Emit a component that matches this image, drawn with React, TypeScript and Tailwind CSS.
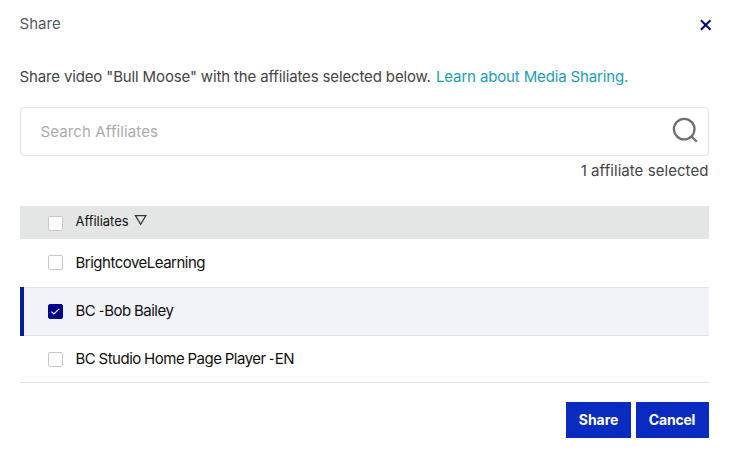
import { useState } from "react";

const rows = [
  { lead: "", name: "BrightcoveLearning", spacing: "tracking-[-0.5px]" },
  { lead: "BC", name: "Bob Bailey", spacing: "tracking-[-0.5px] [word-spacing:-0.5px]" },
  { lead: "BC Studio Home Page Player", name: "EN", spacing: "tracking-[-0.5px] [word-spacing:-0.4px]" },
];

function Checkbox({ checked, onClick, label }: { checked: boolean; onClick?: () => void; label: string }) {
  return (
    <button
      role="checkbox"
      aria-checked={checked}
      aria-label={label}
      onClick={onClick}
      className={`flex size-[15px] shrink-0 items-center justify-center rounded-[2px] border ${
        checked ? "border-[#03008b] bg-[#03008b]" : "border-[#c8c8c8] bg-white"
      }`}
    >
      {checked && (
        <svg width="11" height="9" viewBox="0 0 11 9" fill="none" stroke="white" strokeWidth="1.1" className="-ml-px shrink-0">
          <path d="M1.4 4.6 L3.9 7 L9.2 1.8" />
        </svg>
      )}
    </button>
  );
}

export default function App() {
  const [selected, setSelected] = useState([false, true, false]);
  const toggle = (i: number) => setSelected((s) => s.map((v, j) => (j === i ? !v : v)));
  const count = selected.filter(Boolean).length;

  return (
    <main className="flex h-[458px] w-[729px] flex-col bg-white pr-5 pl-5 font-['Inter',sans-serif] text-[15px] text-[#444444]">
      <header className="flex h-[48px] items-center justify-between">
        <h1 className="-ml-[0.5px] leading-[20px] tracking-[0.05px] text-[#555963]">Share</h1>
        <button aria-label="Close" className="mt-[2px] -mr-[3px]">
          <svg width="13" height="12" viewBox="0 0 13 12" fill="none" stroke="#03008b" strokeWidth="2">
            <path d="M1.9 1.2 L11.5 10.8 M11.5 1.2 L1.9 10.8" />
          </svg>
        </button>
      </header>

      <p className="mt-[18px] flex h-[22px] items-center whitespace-nowrap">
        <span className="-ml-[0.5px] w-[416.5px] tracking-[-0.14px]">
          Share video "Bull Moose" with the affiliates selected below.
        </span>
        <a href="#" className="tracking-[-0.14px] text-[#169fb5]">Learn about Media Sharing.</a>
      </p>

      <div className="mt-[19px] flex h-[49px] w-[689px] shrink-0 items-center rounded-[4px] border border-[#e3e3e3] pl-[19.5px] pr-[9px]">
        <input
          placeholder="Search Affiliates"
          className="mt-px min-w-0 flex-1 tracking-[0.12px] outline-none placeholder:text-[#ababab]"
        />
        <svg width="28" height="28" viewBox="0 0 28 28" fill="none" stroke="#6c6f76" strokeWidth="2.3" className="-mt-[3px]">
          <circle cx="13.2" cy="13.1" r="10.3" />
          <path d="M20.4 20.4 L25.8 25.7" />
        </svg>
      </div>

      <p className="mt-[5px] mr-[0.5px] h-[20px] text-right leading-[20px] tracking-[0.06px]">{count} affiliate selected</p>

      <section className="mt-[25px] w-[689px] text-[#101010]">
        <div className="flex h-[33px] items-center bg-[#e4e6e5] pl-7">
          <div className="mt-px mr-[12.5px]">
            <Checkbox label="Select all" checked={false} />
          </div>
          <span className="-mt-[2px] text-[13px] tracking-[-0.04px]">Affiliates</span>
          <svg width="14" height="12" viewBox="0 0 14 12" fill="none" stroke="#333" strokeWidth="1.2" className="-mt-[5px] ml-[5px]">
            <path d="M1.4 1.6 H11.9 L6.65 10.3 Z" />
          </svg>
        </div>
        {rows.map((row, i) => (
          <div
            key={row.name}
            className={`flex items-center gap-[12.5px] border-[#e2e3e5] ${
              selected[i]
                ? "ml-1 h-[49px] border-y bg-[#f2f3f9] pl-6 shadow-[-4px_0_#041e91]"
                : i === 0
                  ? "h-[48px] pl-7"
                  : "h-[47px] border-b pl-7"
            }`}
          >
            <div className={i === 0 ? "-mt-px" : ""}>
              <Checkbox label={row.name} checked={selected[i]} onClick={() => toggle(i)} />
            </div>
            <span className={row.spacing}>
              {row.lead && (
                <>
                  {row.lead}{" "}
                  <span className="inline-block w-[5px] origin-left scale-x-75">-</span>
                  <span className="[word-spacing:-3px]"> </span>
                </>
              )}
              {row.name}
            </span>
          </div>
        ))}
      </section>

      <footer className="mt-[19px] flex w-[689px] justify-end gap-[5px] text-[14px] font-bold text-white">
        <button className="h-[36px] w-[65px] bg-[#092bbf] pb-[2px] tracking-[-0.05px]">Share</button>
        <button className="h-[36px] w-[73px] bg-[#092bbf] pr-[1px] pb-[2px] tracking-[-0.2px]">Cancel</button>
      </footer>
    </main>
  );
}
